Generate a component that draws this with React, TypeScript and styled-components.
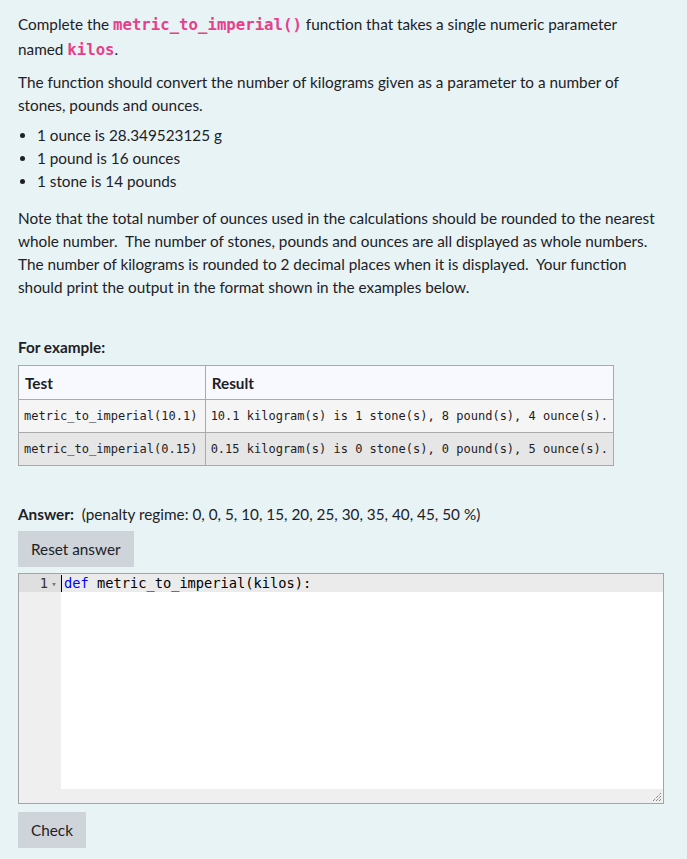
import styled, { createGlobalStyle } from 'styled-components'

const GlobalStyle = createGlobalStyle`
  html, body {
    margin: 0;
    padding: 0;
    background: #e7f3f5;
  }
  body {
    font-family: Lato, "Open Sans", sans-serif;
    font-size: 15.3px;
    color: #1d2125;
  }
`

type Example = {
  test : string
  result : string
}

const examples : Example[] = [
  { test: 'metric_to_imperial(10.1)', result: '10.1 kilogram(s) is 1 stone(s), 8 pound(s), 4 ounce(s).' },
  { test: 'metric_to_imperial(0.15)', result: '0.15 kilogram(s) is 0 stone(s), 0 pound(s), 5 ounce(s).' },
]

function ResizeGrip () {
  return (
    <Grip width="10" height="10" viewBox="0 0 10 10">
      <path d="M1 9 L9 1 M4 9 L9 4 M7 9 L9 7" stroke="#555" strokeWidth="1" strokeDasharray="1 1" fill="none" />
    </Grip>
  )
}

function App () {
  return (
    <Page>
      <GlobalStyle />
      <Intro>
        <span>Complete the</span> <Code>metric_to_imperial()</Code> <span>function that takes a single numeric parameter
        named</span> <Code>kilos</Code>.
      </Intro>
      <Para>
        The function should convert the number of kilograms given as a parameter to a number of
        stones, pounds and ounces.
      </Para>
      <Bullets>
        <li>1 ounce is 28.349523125 g</li>
        <li>1 pound is 16 ounces</li>
        <li>1 stone is 14 pounds</li>
      </Bullets>
      <Note>
        Note that the total number of ounces used in the calculations should be rounded to the nearest
        whole number.&nbsp; The number of stones, pounds and ounces are all displayed as whole numbers.
        The number of kilograms is rounded to 2 decimal places when it is displayed.&nbsp; Your function
        should print the output in the format shown in the examples below.
      </Note>

      <Heading>For example:</Heading>
      <ExampleTable>
        <thead>
          <tr>
            <HeadCell style={{width: 175}}>Test</HeadCell>
            <HeadCell>Result</HeadCell>
          </tr>
        </thead>
        <tbody>
          {examples.map((ex, i) => (
            <Row key={i} odd={i % 2 == 1}>
              <Cell>{ex.test}</Cell>
              <Cell>{ex.result}</Cell>
            </Row>
          ))}
        </tbody>
      </ExampleTable>

      <AnswerLine>
        <b>Answer:</b>&nbsp; (penalty regime: 0, 0, 5, 10, 15, 20, 25, 30, 35, 40, 45, 50 %)
      </AnswerLine>
      <Button>Reset answer</Button>

      <EditorBox>
        <Editor>
          <Gutter>
            <GutterLine>
              1<FoldArrow>▾</FoldArrow>
            </GutterLine>
          </Gutter>
          <Content>
            <ActiveLine>
              <Cursor />
              <Keyword>def</Keyword> metric_to_imperial(kilos):
            </ActiveLine>
          </Content>
        </Editor>
        <ResizeGrip />
      </EditorBox>

      <Button>Check</Button>
    </Page>
  )
}

const Page = styled.div`
  width: 646px;
  padding: 12px 0 12px 18px;
  min-height: 835px;
  box-sizing: content-box;
`

const Code = styled.code`
  font-family: "DejaVu Sans Mono", monospace;
  font-weight: bold;
  font-size: 15.7px;
  line-height: 1;
  color: #e83e8c;
`

const Intro = styled.p`
  margin: 0;
  line-height: 25px;
`

const Para = styled.p`
  margin: 9px 0 0 0;
  line-height: 23px;
`

const Bullets = styled.ul`
  margin: 7px 0 0 0;
  padding-left: 19px;
  line-height: 23px;
`

const Note = styled.p`
  margin: 14px 0 0 0;
  line-height: 23px;
`

const Heading = styled.div`
  margin-top: 37px;
  font-weight: bold;
  line-height: 23px;
`

const ExampleTable = styled.table`
  margin-top: 6px;
  border-collapse: collapse;
  border: 1px solid #aaa;
  width: 596px;
`

const HeadCell = styled.th`
  text-align: left;
  font-weight: bold;
  background: #f8f9fe;
  border: 1px solid #aaa;
  padding: 0 6px;
  height: 33px;
`

const Row = styled.tr<{odd : boolean}>`
  background: ${(props) => props.odd ? '#e6e6e6' : '#f5f5f5'};
`

const Cell = styled.td`
  font-family: "DejaVu Sans Mono", monospace;
  font-size: 12px;
  border: 1px solid #aaa;
  padding: 0 5px;
  height: 32px;
  white-space: nowrap;
`

const AnswerLine = styled.div`
  margin-top: 37px;
  line-height: 23px;
`

const Button = styled.div`
  display: inline-block;
  margin-top: 5px;
  padding: 0 13px;
  height: 36px;
  line-height: 36px;
  background: #ced4da;
  color: #1d2125;
`

const EditorBox = styled.div`
  position: relative;
  margin-top: 6px;
  margin-bottom: 3px;
  width: 646px;
  height: 231px;
  box-sizing: border-box;
  border: 1px solid #a5a5a5;
  background: #efefef;
  padding-bottom: 14px;
`

const Editor = styled.div`
  display: flex;
  height: 100%;
`

const Gutter = styled.div`
  width: 42px;
  background: #efefef;
  color: #333;
`

const GutterLine = styled.div`
  height: 18px;
  line-height: 18px;
  background: #dfdfdf;
  text-align: right;
  padding-right: 1px;
  font-family: "DejaVu Sans Mono", monospace;
  font-size: 13.7px;
`

const FoldArrow = styled.span`
  display: inline-block;
  width: 12px;
  text-align: center;
  font-size: 9px;
  color: #777;
  vertical-align: 1px;
`

const Content = styled.div`
  flex: 1;
  background: #fff;
`

const ActiveLine = styled.div`
  position: relative;
  height: 18px;
  line-height: 18px;
  background: #ebebeb;
  padding-left: 3px;
  font-family: "DejaVu Sans Mono", monospace;
  font-size: 13.7px;
  color: #000;
  white-space: pre;
`

const Cursor = styled.span`
  position: absolute;
  left: 0;
  top: 1px;
  width: 1px;
  height: 17px;
  background: #000;
`

const Keyword = styled.span`
  color: #0000ff;
`

const Grip = styled.svg`
  position: absolute;
  right: 1px;
  bottom: 1px;
`

export default App
